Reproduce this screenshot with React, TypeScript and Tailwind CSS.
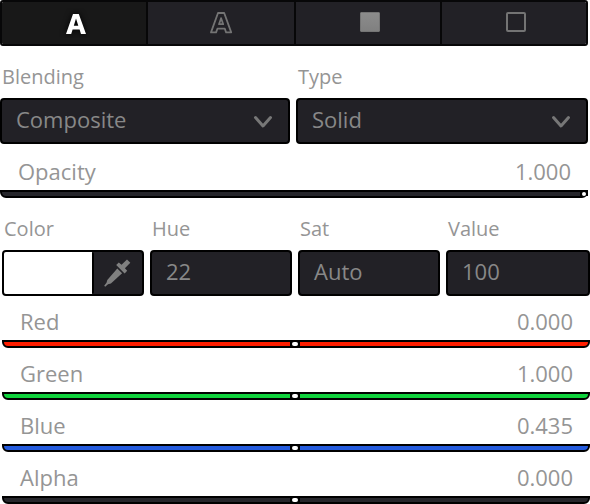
import React from "react";

function Tab({ width, active = false, last = false, children }: { width: string; active?: boolean; last?: boolean; children: React.ReactNode }) {
  return (
    <button className={`flex h-[42px] items-center justify-center ${width} ${active ? "bg-[#181818]" : "bg-[#222126]"} ${last ? "" : "box-content border-r-2 border-[#070708]"}`}>
      {children}
    </button>
  );
}

function Label({ width, children }: { width: string; children: string }) {
  return <span className={`text-[20px] leading-[24px] ${width}`}>{children}</span>;
}

function Select({ width, value }: { width: string; value: string }) {
  return (
    <div className={`flex h-[46px] items-center justify-between rounded-[4px] border-2 border-black bg-[#222126] pl-[14px] pr-[15px] text-[#888] ${width}`}>
      <span className="pb-[4px] text-[22px] leading-[30px]">{value}</span>
      <svg className="mt-[2px] h-[14px] w-[20px]" viewBox="0 0 20 14" fill="none" stroke="#777" strokeWidth="3" strokeLinecap="round" strokeLinejoin="round">
        <path d="M2.5 2.5 10 11l7.5-8.5" />
      </svg>
    </div>
  );
}

function Field({ width, value }: { width: string; value: string }) {
  return (
    <div className={`flex h-[46px] items-center rounded-[4px] border-2 border-black bg-[#222126] pl-[14px] text-[#888] ${width}`}>
      <span className="pb-[4px] text-[22px] leading-[30px]">{value}</span>
    </div>
  );
}

function Slider({ name, value, color, end = false }: { name: string; value: string; color: string; end?: boolean }) {
  return (
    <div className="w-[588px]">
      <div className="flex h-[30px] justify-between pl-[18px] pr-[17px] text-[22px] leading-[30px]">
        <span>{name}</span>
        <span>{value}</span>
      </div>
      <div className={`mt-[4px] flex h-[8px] items-center rounded-b-[6px] border-2 border-black ${color} ${end ? "justify-end" : "justify-center"}`}>
        <span className={`box-content h-[4px] border-x-2 border-black bg-black ${end ? "-mr-[2px] w-[4px]" : "mr-[2px] w-[6px]"}`}>
          <span className="block h-[4px] rounded-[2px] bg-white" />
        </span>
      </div>
    </div>
  );
}

export default function App() {
  return (
    <div className="h-[504px] w-[590px] overflow-hidden bg-white font-['Open_Sans',sans-serif] text-[#959595]">
      <div className="flex h-[46px] w-[588px] overflow-hidden rounded-[3px] border-2 border-[#070708]">
        <Tab width="w-[144px]" active>
          <svg className="h-[30px] w-[32px]" viewBox="0 0 32 30">
            <path d="M8 26 15 6h5.8L28 26h-5l-1.4-4.4h-7L13.2 26ZM15.8 17.8h4.5L18 10.6Z" fill="white" fillRule="evenodd" className="drop-shadow-[0_0_3px_#000]" />
          </svg>
        </Tab>
        <Tab width="w-[146px]">
          <svg className="h-[30px] w-[32px]" viewBox="0 0 32 30" fill="none" stroke="#747474" strokeWidth="1.8" strokeLinejoin="round">
            <path d="m6 24.4 7-19.4h6.2l7 19.4h-5.1l-1.3-3.7h-7.4l-1.3 3.7ZM14 16.2h4.2l-2.1-6Z" />
          </svg>
        </Tab>
        <Tab width="w-[144px]">
          <span className="mb-[2px] ml-[4px] h-[20px] w-[20px] rounded-[1px] border border-[#757575] bg-linear-to-b from-[#8c8c8c] to-[#808080]" />
        </Tab>
        <Tab width="w-[144px]" last>
          <span className="mb-[2px] ml-[4px] h-[20px] w-[20px] rounded-[2px] border-2 border-[#747474]" />
        </Tab>
      </div>

      <div className="mt-[19px] flex gap-[6px] pl-[2px]">
        <Label width="w-[290px]">Blending</Label>
        <Label width="w-[200px]">Type</Label>
      </div>
      <div className="mt-[9px] flex gap-[6px]">
        <Select width="w-[290px]" value="Composite" />
        <Select width="w-[292px]" value="Solid" />
      </div>

      <div className="mt-[12px]">
        <Slider name="Opacity" value="1.000" color="bg-[#26262b]" end />
      </div>

      <div className="mt-[19px] flex pl-[4px]">
        <Label width="w-[148px]">Color</Label>
        <Label width="w-[148px]">Hue</Label>
        <Label width="w-[148px]">Sat</Label>
        <Label width="w-[140px]">Value</Label>
      </div>
      <div className="mt-[9px] flex gap-[6px] pl-[2px]">
        <div className="flex h-[46px] w-[142px] rounded-[4px] border-2 border-black bg-[#222126]">
          <div className="h-[42px] w-[90px] rounded-[2px] border-r-2 border-black bg-white" />
          <div className="flex flex-1 items-center justify-center">
            <svg className="h-[30px] w-[30px]" viewBox="0 0 30 30" fill="#808080">
              <path d="m24 1.5 3.3 3.3-5.4 5.4 2.3 2.6-2.6 2.6-8.4-8.4 2.6-2.6 2.7 2.3Z" />
              <path d="m14.3 10.5 4.8 4.8-11.2 10.1-2.9.8-2.8 2.6-1-1 2.3-3 .8-2.9Z" />
            </svg>
          </div>
        </div>
        <Field width="w-[142px]" value="22" />
        <Field width="w-[142px]" value="Auto" />
        <Field width="w-[144px]" value="100" />
      </div>

      <div className="mt-[10px] flex flex-col gap-[10px] pl-[2px]">
        <Slider name="Red" value="0.000" color="bg-[#ff1e00]" />
        <Slider name="Green" value="1.000" color="bg-[#0fd23c]" />
        <Slider name="Blue" value="0.435" color="bg-[#245bdd]" />
        <Slider name="Alpha" value="0.000" color="bg-[#26262b]" />
      </div>
    </div>
  );
}
